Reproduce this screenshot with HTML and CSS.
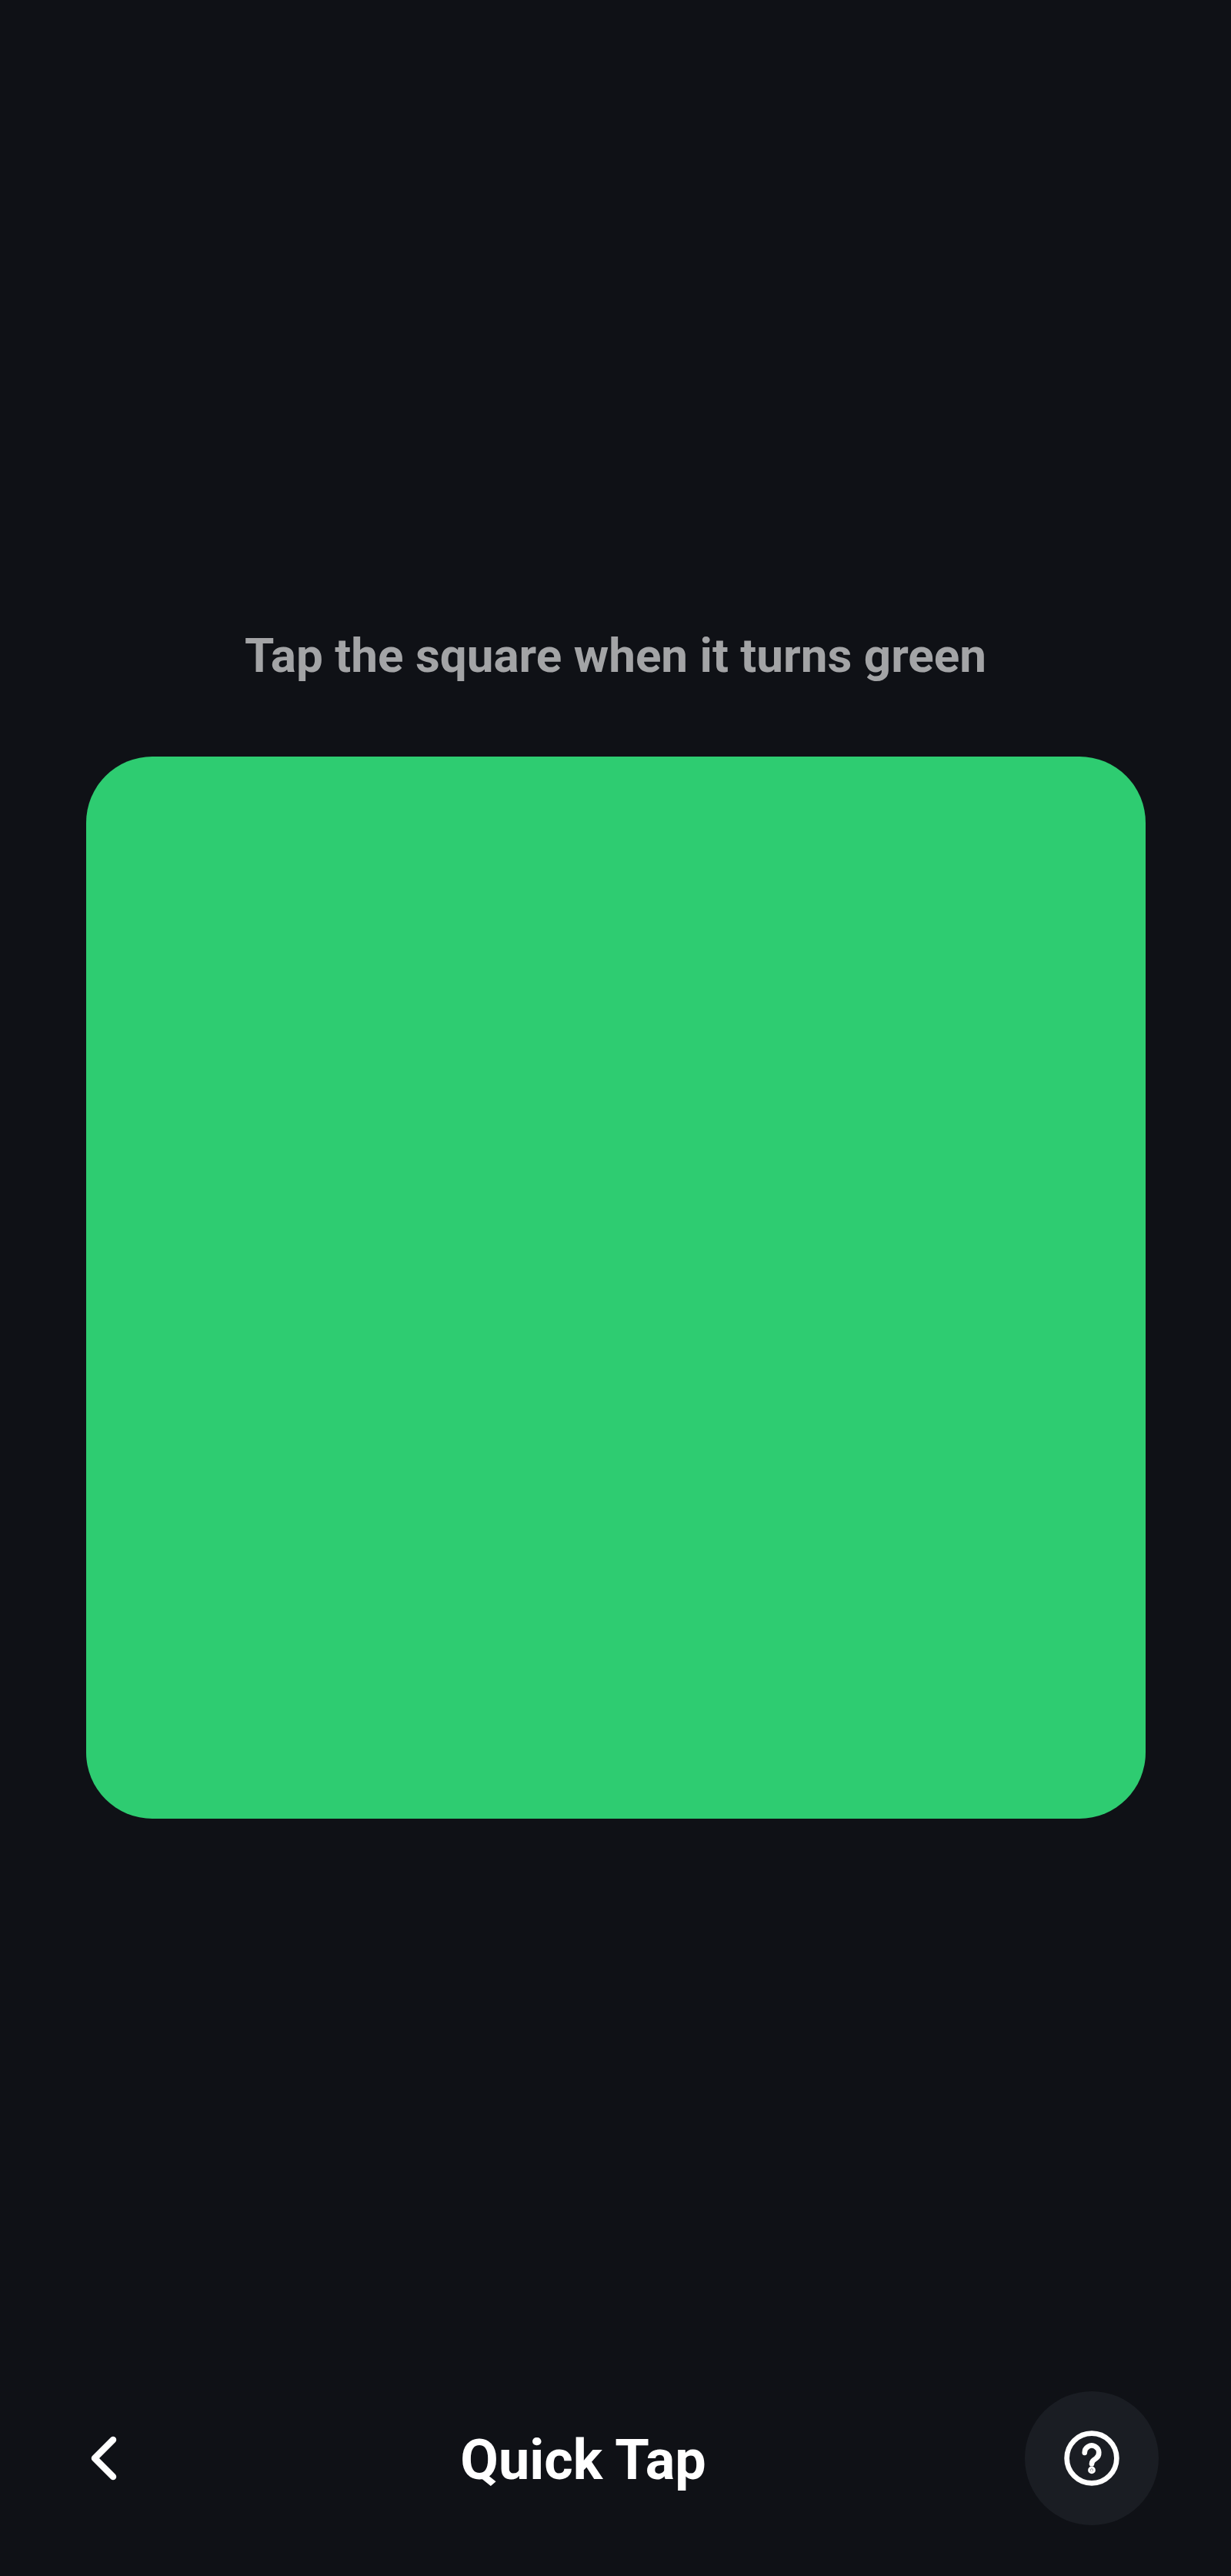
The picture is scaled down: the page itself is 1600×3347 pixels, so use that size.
FILE: index.html
```html
<!DOCTYPE html>
<html lang="en">

<head>
  <meta charset="UTF-8">
  <title>Quick Tap</title>
  <link rel="stylesheet" href="styles.css">
</head>

<body>
  <div class="screen">
    <main class="game">
      <p class="hint">Tap the square when it turns green</p>
      <div class="square"></div>
    </main>
    <footer class="bottom-bar">
      <button class="back" aria-label="Back">
        <svg viewBox="0 0 48 64" width="48" height="64" fill="none" stroke="#fff" stroke-width="8.5" stroke-linecap="round" stroke-linejoin="round">
          <path d="M43 8 L19 32 L43 56"></path>
        </svg>
      </button>
      <h1 class="title">Quick Tap</h1>
      <button class="help" aria-label="Help">
        <svg viewBox="0 0 72 72" width="74" height="74" fill="none" stroke="#fff" stroke-width="6.5" stroke-linecap="round">
          <circle cx="36" cy="36" r="31.5"></circle>
          <path d="M27 29 a9 9 0 1 1 14 7.5 c-3 2 -5 3 -5 6.5"></path>
          <circle cx="36" cy="51" r="1.5" fill="#fff"></circle>
        </svg>
      </button>
    </footer>
  </div>
</body>

</html>
```

FILE: styles.css
```css
* {
  box-sizing: border-box;
}

html,
body {
  margin: 0;
  height: 100%;
}

body {
  background-color: #0f1116;
  font-family: Roboto, "Liberation Sans", sans-serif;
}

.screen {
  display: flex;
  flex-direction: column;
  height: 3347px;
  overflow: hidden;
}

.game {
  flex: 1;
  padding: 812px 112px 0;
}

.hint {
  margin: 0;
  font-size: 62px;
  line-height: 80px;
  font-weight: 700;
  color: #a3a4a6;
  text-align: center;
}

.square {
  width: 1377px;
  height: 1380px;
  margin-top: 91px;
  background-color: #2ecc71;
  border-radius: 86px;
}

.bottom-bar {
  display: flex;
  align-items: center;
  height: 176px;
  margin-bottom: 65px;
  padding: 0 94px 0 104px;
}

.back,
.help {
  display: flex;
  align-items: center;
  justify-content: center;
  padding: 0;
  border: none;
  background: none;
}

.back {
  width: 48px;
}

.title {
  flex: 1;
  margin: 0;
  padding: 6px 0 0 32px;
  font-size: 72px;
  line-height: 90px;
  font-weight: 700;
  color: #fff;
  text-align: center;
}

.help {
  width: 174px;
  height: 174px;
  background-color: #1a1d23;
  border-radius: 50%;
}
```
